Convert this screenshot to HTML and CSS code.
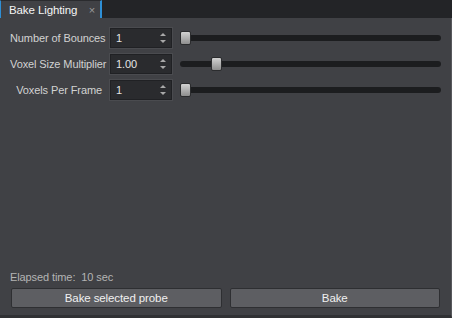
FILE: index.html
```html
<!DOCTYPE html>
<html lang="en">
<head>
    <meta charset="UTF-8">
    <title>Bake Lighting</title>
    <link rel="stylesheet" href="styles.css">
</head>
<body>
    <div class="tab-bar">
        <div class="tab">
            <span class="tab-title">Bake Lighting</span>
            <span class="tab-close">&times;</span>
        </div>
    </div>

    <div class="panel">
        <div class="rows">
            <div class="row">
                <label class="row-label">Number of Bounces</label>
                <div class="spin">
                    <span class="spin-value">1</span>
                    <span class="spin-arrows"><i class="up"></i><i class="down"></i></span>
                </div>
                <div class="slider">
                    <div class="track"></div>
                    <div class="handle" style="left: 0%"></div>
                </div>
            </div>
            <div class="row">
                <label class="row-label">Voxel Size Multiplier</label>
                <div class="spin">
                    <span class="spin-value">1.00</span>
                    <span class="spin-arrows"><i class="up"></i><i class="down"></i></span>
                </div>
                <div class="slider">
                    <div class="track"></div>
                    <div class="handle" style="left: 12%"></div>
                </div>
            </div>
            <div class="row">
                <label class="row-label">Voxels Per Frame</label>
                <div class="spin">
                    <span class="spin-value">1</span>
                    <span class="spin-arrows"><i class="up"></i><i class="down"></i></span>
                </div>
                <div class="slider">
                    <div class="track"></div>
                    <div class="handle" style="left: 0%"></div>
                </div>
            </div>
        </div>

        <div class="footer">
            <div class="elapsed">Elapsed time:&nbsp; 10 sec</div>
            <div class="buttons">
                <button class="btn">Bake selected probe</button>
                <button class="btn">Bake</button>
            </div>
        </div>
    </div>
</body>
</html>
```

FILE: styles.css
```css
* {
    margin: 0;
    padding: 0;
    box-sizing: border-box;
}

html, body {
    height: 100%;
}

body {
    font-family: 'Liberation Sans', Arial, sans-serif;
    font-size: 11px;
    letter-spacing: -0.1px;
    background: #232427;
    color: #d6d6d6;
    display: flex;
    flex-direction: column;
    overflow: hidden;
}

.tab-bar {
    height: 18px;
    display: flex;
    align-items: flex-end;
    background: #232427;
    flex-shrink: 0;
}

.tab {
    width: 102px;
    height: 18px;
    display: flex;
    align-items: center;
    justify-content: space-between;
    padding: 0 5px 0 8px;
    background: #404145;
    border-left: 1px solid #2e8fd6;
    border-right: 2px solid #2e8fd6;
    border-top: 1px solid #2a2b2e;
}

.tab-title {
    color: #f4f4f4;
    font-size: 11.5px;
}

.tab-close {
    color: #9a9a9a;
    font-size: 11px;
}

.panel {
    flex: 1;
    display: flex;
    flex-direction: column;
    justify-content: space-between;
    background: #404145;
    border-right: 1px solid #58595d;
    border-bottom: 3px solid #303134;
    padding: 10px 10px 7px 10px;
}

.rows {
    display: flex;
    flex-direction: column;
    gap: 6px;
}

.row {
    display: flex;
    align-items: center;
    height: 20px;
}

.row-label {
    width: 92px;
    text-align: right;
    white-space: nowrap;
    color: #d2d2d2;
}

.spin {
    width: 62px;
    height: 20px;
    margin-left: 8px;
    display: flex;
    align-items: center;
    justify-content: space-between;
    background: #2a2b2e;
    border: 1px solid #202124;
    box-shadow: 0 0 0 1px #4a4b4f;
    padding: 0 5px 0 5px;
}

.spin-value {
    color: #e4e4e4;
}

.spin-arrows {
    display: flex;
    flex-direction: column;
    gap: 4px;
}

.spin-arrows i {
    display: block;
    width: 0;
    height: 0;
    border-left: 3px solid transparent;
    border-right: 3px solid transparent;
}

.spin-arrows .up {
    border-bottom: 3px solid #a8a8a8;
}

.spin-arrows .down {
    border-top: 3px solid #a8a8a8;
}

.slider {
    flex: 1;
    position: relative;
    height: 20px;
    margin-left: 8px;
    display: flex;
    align-items: center;
}

.track {
    width: 100%;
    height: 6px;
    background: #1c1d1f;
    border-radius: 3px;
}

.handle {
    position: absolute;
    top: 3px;
    width: 11px;
    height: 14px;
    border-radius: 2px;
    background: linear-gradient(#d2d2d2, #8e8e8e);
    border: 1px solid #2b2c2e;
}

.footer {
    display: flex;
    flex-direction: column;
    gap: 5px;
}

.elapsed {
    color: #b4b4b4;
}

.buttons {
    display: flex;
    gap: 8px;
    padding: 0 1px;
}

.btn {
    flex: 1;
    height: 20px;
    font-family: inherit;
    font-size: 11.5px;
    letter-spacing: -0.1px;
    color: #f0f0f0;
    background: #5d5e62;
    border: 1px solid #2e2f32;
    border-radius: 2px;
}
```
